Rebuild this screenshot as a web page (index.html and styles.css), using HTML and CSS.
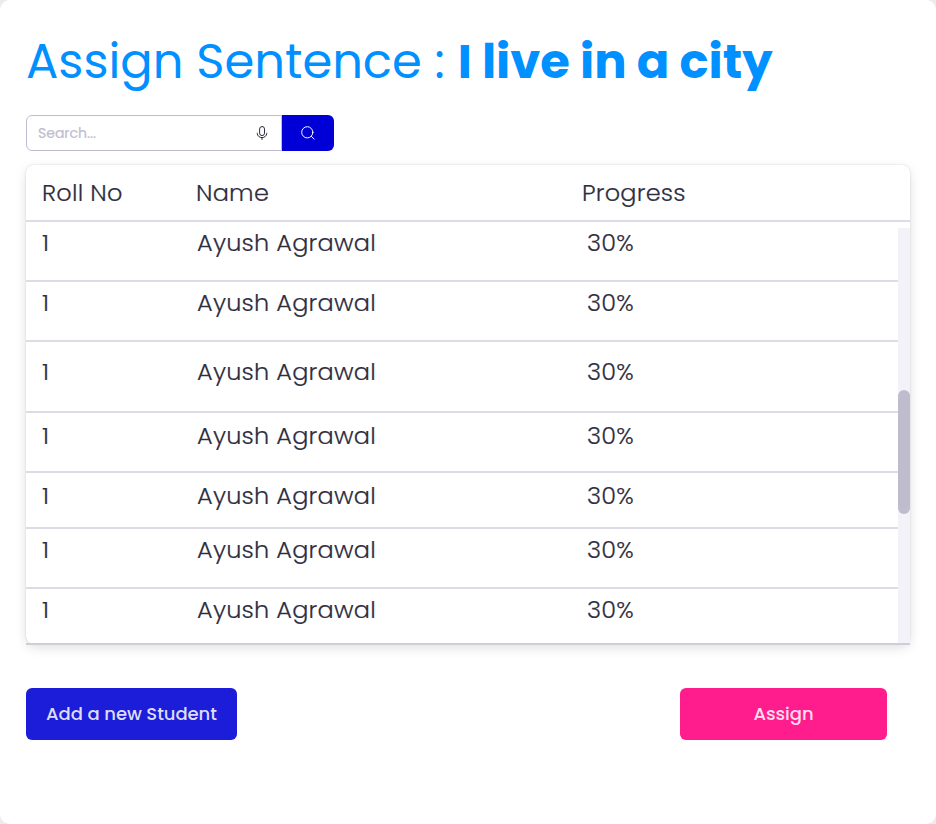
FILE: index.html
```html
<!DOCTYPE html>
<html lang="en">
<head>
<meta charset="utf-8">
<title>Assign Sentence</title>
<link rel="stylesheet" href="styles.css">
</head>
<body>
<main class="panel">
  <h1 class="title">Assign Sentence : <strong class="title-sentence">I live in a city</strong></h1>
  <div class="search">
    <div class="search-field">
      <span class="placeholder">Search...</span>
      <svg class="mic" width="16" height="16" viewBox="0 0 16 16" fill="none" stroke="#2b2a3d" stroke-linecap="round" stroke-linejoin="round"><rect x="5.6" y="1.5" width="4.9" height="9.1" rx="2.45"/><path d="M3.3 8.2v.3a4.7 4.1 0 0 0 9.4 0v-.3M8 12.7v1.8"/></svg>
    </div>
    <div class="search-button">
      <svg width="16" height="16" viewBox="0 0 16 16" fill="none" stroke="#fff" stroke-linecap="round"><circle cx="7.3" cy="7.3" r="5.6"/><path d="M11.4 11.4l2.7 2.7"/></svg>
    </div>
  </div>
  <section class="table">
    <div class="row head"><span>Roll No</span><span>Name</span><span>Progress</span></div>
    <div class="body">
      <div class="rows">
        <div class="row"><span>1</span><span>Ayush Agrawal</span><span>30%</span></div>
        <div class="row"><span>1</span><span>Ayush Agrawal</span><span>30%</span></div>
        <div class="row tall"><span>1</span><span>Ayush Agrawal</span><span>30%</span></div>
        <div class="row lower"><span>1</span><span>Ayush Agrawal</span><span>30%</span></div>
        <div class="row lower short"><span>1</span><span>Ayush Agrawal</span><span>30%</span></div>
        <div class="row"><span>1</span><span>Ayush Agrawal</span><span>30%</span></div>
        <div class="row last"><span>1</span><span>Ayush Agrawal</span><span>30%</span></div>
      </div>
      <div class="track"><div class="thumb"></div></div>
    </div>
    <div class="foot-line"></div>
  </section>
  <div class="actions">
    <div class="button add"><span>Add a new Student</span></div>
    <div class="button assign"><span>Assign</span></div>
  </div>
</main>
</body>
</html>
```
FILE: styles.css
```css
* { box-sizing: border-box; }
body {
  margin: 0;
  background: #ececec;
  font-family: Poppins, Inter, "Liberation Sans", sans-serif;
  color: #2f2e41;
}
.panel {
  width: 936px;
  height: 824px;
  padding: 26px 26px 0;
  background: #fff;
  border-radius: 10px;
}
.title {
  height: 72px;
  margin: 0;
  font-size: 48px;
  line-height: 72px;
  font-weight: 400;
  color: #0090ff;
  white-space: nowrap;
}
.title-sentence { font-weight: 700; }
.search { display: flex; width: 308px; height: 36px; margin-top: 17px; }
.search-field {
  display: flex;
  align-items: center;
  justify-content: space-between;
  width: 256px;
  padding: 0 11px;
  border: 1px solid #bfbcd0;
  border-radius: 6px 0 0 6px;
}
.placeholder { font-size: 14px; -webkit-text-stroke: .2px #bfbcd0; color: #bfbcd0; }
.search-button {
  display: flex;
  align-items: center;
  justify-content: center;
  width: 52px;
  background: #0000d6;
  border-radius: 0 6px 6px 0;
}
.table {
  width: 884px;
  height: 479px;
  margin-top: 14px;
  background: #fff;
  border-radius: 8px;
  box-shadow: 0 4px 12px rgba(0, 0, 0, .12), 0 0 2px rgba(0, 0, 0, .15);
}
.row {
  display: grid;
  grid-template-columns: 155px 390px 1fr;
  height: 60px;
  padding: 3px 0 0 16px;
  border-bottom: 2px solid #dddce4;
  font-size: 24px;
  line-height: 36px;
  font-weight: 300;
  letter-spacing: .23px;
  white-space: nowrap;
  -webkit-text-stroke: .2px #2f2e41;
}
.head { grid-template-columns: 154px 386px 1fr; height: 57px; padding-top: 10px; }
.tall { height: 71px; padding-top: 12px; }
.lower { padding-top: 5px; }
.short { height: 56px; }
.last { height: 54px; border-bottom: 0; }
.body { display: flex; height: 421px; }
.rows { width: 872px; }
.track { width: 12px; height: 415px; margin-top: 6px; padding-top: 162px; background: #f3f2f8; }
.thumb { height: 124px; background: #bfbcce; border-radius: 6px; }
.foot-line { height: 2px; background: #cecdda; }
.actions { display: flex; justify-content: space-between; margin-top: 44px; padding-right: 23px; }
.button {
  display: flex;
  align-items: center;
  justify-content: center;
  height: 52px;
  padding-bottom: 2px;
  border-radius: 6px;
  font-size: 18px;
  font-weight: 500;
  letter-spacing: -.06px;
}
.add { width: 211px; background: #1b1dd8; color: #dddcf8; }
.assign { width: 207px; background: #ff1d8e; color: #ffdced; }
```
